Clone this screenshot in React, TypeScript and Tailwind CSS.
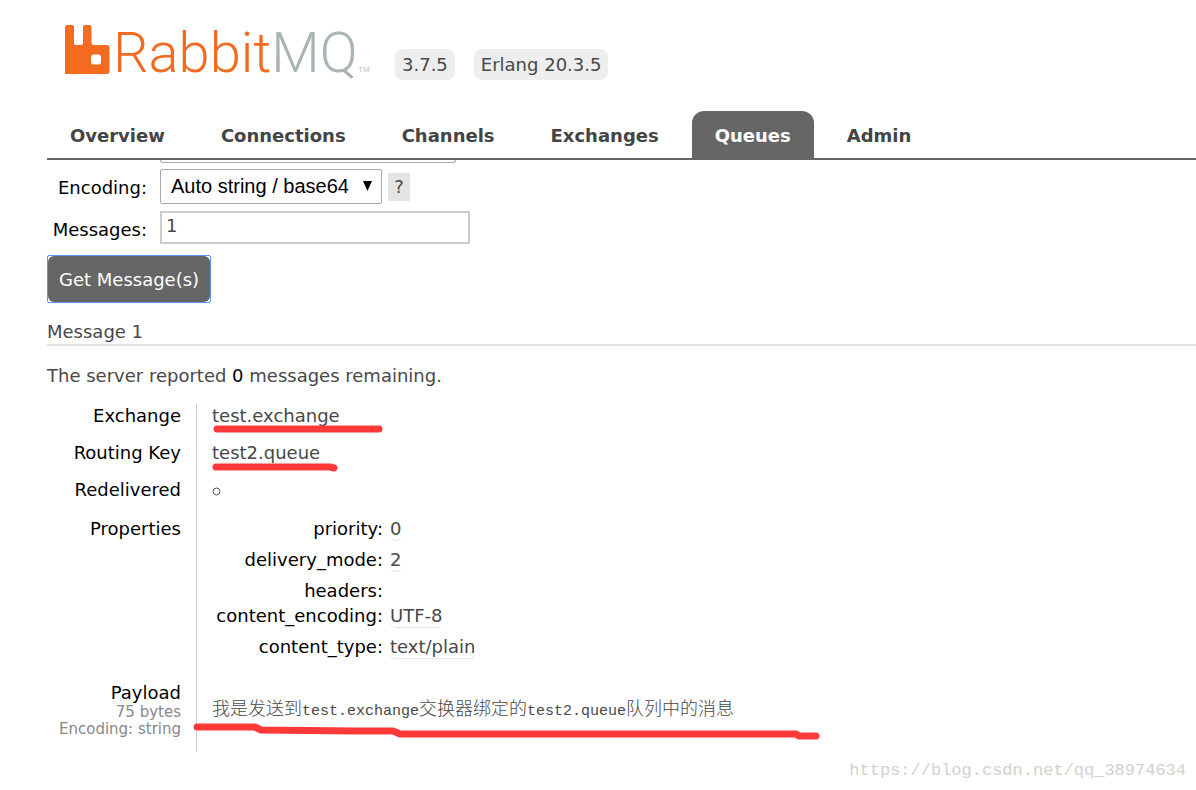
import { useState } from 'react';
import type { ReactNode } from 'react';

type Tab = { label: string; href: string };

const TABS: Tab[] = [
  { label: 'Overview', href: '#/' },
  { label: 'Connections', href: '#/connections' },
  { label: 'Channels', href: '#/channels' },
  { label: 'Exchanges', href: '#/exchanges' },
  { label: 'Queues', href: '#/queues' },
  { label: 'Admin', href: '#/users' },
];

const PROPERTIES: { name: string; value: string | null }[] = [
  { name: 'priority', value: '0' },
  { name: 'delivery_mode', value: '2' },
  { name: 'headers', value: null },
  { name: 'content_encoding', value: 'UTF-8' },
  { name: 'content_type', value: 'text/plain' },
];

function Logo() {
  return (
    <svg width="310" height="72" viewBox="0 0 310 72" role="img" aria-label="RabbitMQ">
      <path
        fill="#f56a21"
        fillRule="evenodd"
        d="M0 7.5Q0 5 2.500 5H7Q9 5 9 7V23Q9 25 11 25H16Q18 25 18 23V7Q18 5 20 5H24.500Q26.500 5 26.500 7V23Q26.500 25 28.500 25H42Q44.500 25 44.500 27.500V51.500Q44.500 54 42 54H0ZM28.500 34.500Q26 34.500 26 37V42Q26 44.500 28.500 44.500H33.500Q36 44.500 36 42V37Q36 34.500 33.500 34.500Z"
      />
      <text x="48" y="52" fontSize="56" className="font-['Roboto',sans-serif] font-light">
        <tspan fill="#f56a21">Rabbit</tspan>
        <tspan fill="#a9b6ae">MQ</tspan>
      </text>
      <text x="293" y="52" fontSize="8" fill="#b9c2bc" className="font-['Liberation_Sans',sans-serif]">
        TM
      </text>
    </svg>
  );
}

function Badge({ children }: { children: ReactNode }) {
  return <span className="rounded-lg bg-[#eeeeee] px-[7px] leading-[31px]">{children}</span>;
}

// Hand-drawn red marker line laid over the text it points at
function Marker({ points, width, className }: { points: string; width: number; className: string }) {
  return (
    <svg className={`pointer-events-none absolute ${className}`} width={width} height="26" aria-hidden="true">
      <polyline points={points} fill="none" stroke="#ff3838" strokeWidth="7" strokeLinecap="round" strokeLinejoin="round" />
    </svg>
  );
}

function FactRow({ label, children }: { label: ReactNode; children: ReactNode }) {
  return (
    <tr className="align-top">
      <th scope="row" className="border-r border-[#cccccc] pt-px pr-[15px] pb-[14px] text-right font-normal text-black">
        {label}
      </th>
      <td className="relative pt-px pb-[14px] pl-[15px]">{children}</td>
    </tr>
  );
}

export default function App() {
  const [encoding, setEncoding] = useState('auto');
  const [count, setCount] = useState('1');

  return (
    <div className="overflow-hidden bg-white pl-[47px] font-['DejaVu_Sans',sans-serif] text-[18px] leading-[22px] text-[#484848]">
      <header className="flex items-start pt-5 pl-[18px]">
        <a href="#/" className="block">
          <Logo />
        </a>
        <div className="mt-[29px] ml-5 flex gap-[19px]">
          <Badge>3.7.5</Badge>
          <Badge>Erlang 20.3.5</Badge>
        </div>
      </header>

      <nav className="mt-[19px] border-b-2 border-[#666666]">
        <ul className="flex gap-[10px]">
          {TABS.map((tab) => (
            <li key={tab.label}>
              <a
                href={tab.href}
                className={`block rounded-t-xl px-[23px] pt-[2px] font-bold leading-[45px] ${
                  tab.label === 'Queues' ? 'bg-[#666666] text-white' : 'text-[#444444]'
                }`}
              >
                {tab.label}
              </a>
            </li>
          ))}
        </ul>
      </nav>

      <form onSubmit={(e) => e.preventDefault()}>
        {/* Bottom edge of the ack mode field, scrolled under the tabs */}
        <div className="ml-[113px] h-[3px] w-[296px] rounded-b-sm border border-t-0 border-[#a9a9a9]" />
        <div className="mt-[6px] flex items-center">
          <label htmlFor="encoding" className="w-[100px] pt-[2px] text-right text-black">
            Encoding:
          </label>
          <div className="relative ml-[13px]">
            <select
              id="encoding"
              value={encoding}
              onChange={(e) => setEncoding(e.target.value)}
              className="block h-[35px] w-[222px] appearance-none rounded-xs border border-[#a9a9a9] bg-white pb-[2px] pl-[10px] font-['Liberation_Sans',sans-serif] text-[20px] leading-[30px] text-black"
            >
              <option value="auto">Auto string / base64</option>
              <option value="base64">base64</option>
            </select>
            <svg className="pointer-events-none absolute top-3 right-[10px]" width="9" height="10" viewBox="0 0 9 10" aria-hidden="true">
              <path d="M0 0H9L4.500 10Z" fill="#000000" />
            </svg>
          </div>
          <button type="button" className="ml-[6px] h-[28px] w-[22px] bg-[#e4e4e4]">
            ?
          </button>
        </div>
        <div className="mt-[7px] flex items-center">
          <label htmlFor="count" className="w-[100px] pt-1 text-right text-black">
            Messages:
          </label>
          <input
            id="count"
            type="text"
            value={count}
            onChange={(e) => setCount(e.target.value)}
            className="ml-[13px] h-[33px] w-[310px] border-2 border-[#cccccc] bg-white px-1 pb-1"
          />
        </div>
        <div className="mt-[11px] flex">
          <button type="submit" className="rounded-xs border border-[#5b95ee] bg-white text-white">
            <span className="block rounded-md bg-[#666666] px-[11px] pt-[2px] leading-[44px]">Get Message(s)</span>
          </button>
        </div>
      </form>

      <h3 className="mt-[18px] border-b-2 border-[#e4e4e4] pb-[1px]">Message 1</h3>
      <p className="mt-[19px]">
        The server reported <b className="font-normal text-black">0</b> messages remaining.
      </p>

      <table className="mt-[17px] w-full table-fixed border-separate border-spacing-0">
        <colgroup>
          <col className="w-[150px]" />
          <col />
        </colgroup>
        <tbody>
          <FactRow label="Exchange">
            test.exchange
            <Marker className="top-[15px] left-[12px]" width={180} points="8,10 170,10" />
          </FactRow>
          <FactRow label="Routing Key">
            test2.queue
            <Marker className="top-[15px] left-[11px]" width={140} points="8,11 122,11 126,12" />
          </FactRow>
          <FactRow label="Redelivered">
            <svg className="mt-[8px]" width="9" height="9" viewBox="0 0 9 9" role="img" aria-label="no">
              <circle cx="4.500" cy="4.500" r="3.500" fill="none" stroke="#555555" />
            </svg>
          </FactRow>
          <FactRow label={<span className="block pt-[2px]">Properties</span>}>
            <table className="mt-[2px] border-collapse">
              <tbody>
                {PROPERTIES.map((p) => (
                  <tr key={p.name} className="align-top">
                    <th
                      scope="row"
                      className={`w-[171px] text-right font-normal text-black ${p.value ? 'pb-[9px]' : 'pb-[3px]'}`}
                    >
                      {p.name}:
                    </th>
                    <td className="pl-[7px]">
                      {p.value && (
                        <abbr className="block w-fit rounded-md border-b border-dotted border-[#cccccc] no-underline">
                          {p.value}
                        </abbr>
                      )}
                    </td>
                  </tr>
                ))}
              </tbody>
            </table>
          </FactRow>
          <FactRow
            label={
              <>
                Payload
                <span className="block text-[15px] leading-[17px] text-[#888888]">75 bytes</span>
                <span className="block text-[15px] leading-[17px] text-[#888888]">Encoding: string</span>
              </>
            }
          >
            <pre className="mt-[17px] font-['Liberation_Mono','Noto_Sans_CJK_SC',monospace] text-[15px] font-light leading-[22px]">
              <span className="text-[18px]">我是发送到</span>test.exchange<span className="text-[18px]">交换器绑定的</span>
              test2.queue<span className="text-[18px]">队列中的消息</span>
            </pre>
            <Marker
              className="top-[36px] -left-[8px]"
              width={640}
              points="8,10 66,10 72,13 166,14 204,14 211,17 607,17 610,19 627,19"
            />
          </FactRow>
        </tbody>
      </table>

      <p className="mt-[8px] pr-[10px] text-right font-['Liberation_Mono',monospace] text-[17px] text-[#d2d2cc]">
        https://blog.csdn.net/qq_38974634
      </p>
    </div>
  );
}
